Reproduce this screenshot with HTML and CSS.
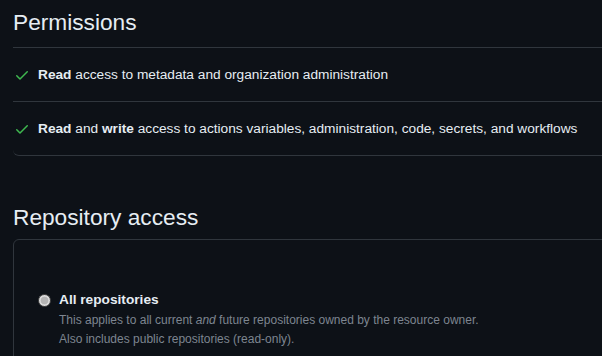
FILE: index.html
```html
<!DOCTYPE html>
<html>
<head>
<meta charset="utf-8">
<link rel="stylesheet" href="styles.css">
</head>
<body>
<main class="page">
  <section class="section">
    <h2 class="section-title">Permissions</h2>
    <ul class="perm-list">
      <li class="perm-item">
        <svg class="check" viewBox="0 0 16 16" width="16" height="16"><path d="M13.78 4.22a.75.75 0 0 1 0 1.06l-7.25 7.25a.75.75 0 0 1-1.06 0L2.22 9.28a.751.751 0 0 1 .018-1.042.751.751 0 0 1 1.042-.018L6 10.94l6.72-6.72a.75.75 0 0 1 1.06 0Z"/></svg>
        <span><strong>Read</strong> access to metadata and organization administration</span>
      </li>
      <li class="perm-item">
        <svg class="check" viewBox="0 0 16 16" width="16" height="16"><path d="M13.78 4.22a.75.75 0 0 1 0 1.06l-7.25 7.25a.75.75 0 0 1-1.06 0L2.22 9.28a.751.751 0 0 1 .018-1.042.751.751 0 0 1 1.042-.018L6 10.94l6.72-6.72a.75.75 0 0 1 1.06 0Z"/></svg>
        <span><strong>Read</strong> and <strong>write</strong> access to actions variables, administration, code, secrets, and workflows</span>
      </li>
    </ul>
  </section>
  <section class="section repo">
    <h2 class="section-title">Repository access</h2>
    <div class="box">
      <div class="option">
        <span class="radio"></span>
        <div class="option-body">
          <div class="option-label">All repositories</div>
          <p class="option-note">This applies to all current <em>and</em> future repositories owned by the resource owner.<br>Also includes public repositories (read-only).</p>
        </div>
      </div>
    </div>
  </section>
</main>
</body>
</html>
```
FILE: styles.css
```css
html, body {
  margin: 0;
  padding: 0;
  background: #0d1117;
  overflow: hidden;
}
body {
  font-family: "Liberation Sans", Arial, sans-serif;
  color: #e6edf3;
  font-size: 13.7px;
}
.page {
  padding-left: 13px;
}
.section-title {
  margin: 0;
  font-size: 22.7px;
  font-weight: 400;
  line-height: 30px;
  padding-top: 7px;
  padding-bottom: 10px;
  border-bottom: 1px solid #30363d;
}
.perm-list {
  list-style: none;
  margin: 0;
  padding: 0;
}
.perm-item {
  display: flex;
  align-items: center;
  gap: 8px;
  height: 53px;
  border-bottom: 1px solid #30363d;
  padding-left: 1px;
}
.perm-item:last-child {
  border-bottom-left-radius: 6px;
}
.check {
  fill: #3fb950;
  flex: none;
}
.perm-item strong {
  font-weight: 700;
}
.repo {
  margin-top: 39px;
}
.repo .section-title {
  border-bottom: 0;
  padding-bottom: 7px;
}
.box {
  border: 1px solid #30363d;
  border-radius: 6px;
  margin-right: -20px;
  padding: 50px 24px 20px;
}
.option {
  display: flex;
  gap: 8px;
}
.radio {
  flex: none;
  width: 11px;
  height: 11px;
  border-radius: 50%;
  border: 1px solid #4a4a4a;
  background: radial-gradient(circle, #b4b4b4 0 3.5px, #dadada 4.2px);
  margin-top: 4px;
}
.option-label {
  font-weight: 700;
  line-height: 20px;
}
.option-note {
  margin: 1px 0 0;
  font-size: 12px;
  line-height: 18.5px;
  color: #7d8590;
}
```
